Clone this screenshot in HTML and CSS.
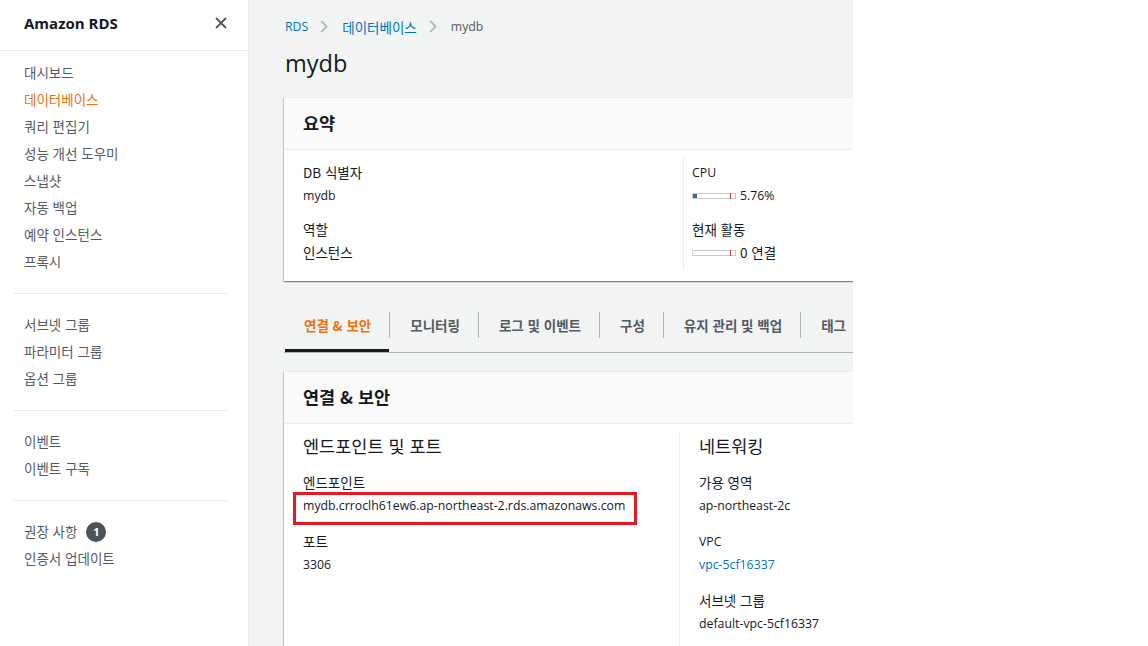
FILE: index.html
```html
<!DOCTYPE html>
<html lang="ko">
<head>
  <meta charset="UTF-8">
  <meta name="viewport" content="width=device-width, initial-scale=1.0">
  <title>RDS · mydb</title>
  <link rel="stylesheet" href="styles.css">
</head>
<body>
  <div class="layout">
    <aside class="sidebar">
      <div class="sidebar-head">
        <span class="brand">Amazon RDS</span>
        <svg class="close" width="12" height="12" viewBox="0 0 12 12"><path d="M1 1 L11 11 M11 1 L1 11" stroke="#545b64" stroke-width="1.8" fill="none"/></svg>
      </div>
      <ul class="nav nav-first">
        <li>대시보드</li>
        <li class="active">데이터베이스</li>
        <li>쿼리 편집기</li>
        <li>성능 개선 도우미</li>
        <li>스냅샷</li>
        <li>자동 백업</li>
        <li>예약 인스턴스</li>
        <li>프록시</li>
      </ul>
      <ul class="nav">
        <li>서브넷 그룹</li>
        <li>파라미터 그룹</li>
        <li>옵션 그룹</li>
      </ul>
      <ul class="nav">
        <li>이벤트</li>
        <li>이벤트 구독</li>
      </ul>
      <ul class="nav">
        <li>권장 사항 <span class="badge">1</span></li>
        <li>인증서 업데이트</li>
      </ul>
    </aside>

    <main class="main">
      <nav class="crumbs">
        <a class="link" lang="en">RDS</a>
        <svg class="chev" width="8" height="13" viewBox="0 0 8 13"><path d="M1.2 1 L6.5 6.5 L1.2 12" stroke="#aab7b8" stroke-width="1.8" fill="none"/></svg>
        <a class="link">데이터베이스</a>
        <svg class="chev" width="8" height="13" viewBox="0 0 8 13"><path d="M1.2 1 L6.5 6.5 L1.2 12" stroke="#aab7b8" stroke-width="1.8" fill="none"/></svg>
        <span class="crumb-current" lang="en">mydb</span>
      </nav>
      <h1>mydb</h1>

      <section class="card">
        <header class="card-head">요약</header>
        <div class="card-body summary">
          <div class="col col-left">
            <div class="field">
              <div class="label">DB 식별자</div>
              <div class="value" lang="en">mydb</div>
            </div>
            <div class="field">
              <div class="label">역할</div>
              <div class="value">인스턴스</div>
            </div>
          </div>
          <div class="col col-right">
            <div class="field">
              <div class="label" lang="en">CPU</div>
              <div class="value metric">
                <span class="meter"><span class="meter-fill" style="width: 9%"></span><span class="meter-mark"></span></span>
                <span lang="en">5.76%</span>
              </div>
            </div>
            <div class="field">
              <div class="label">현재 활동</div>
              <div class="value metric">
                <span class="meter"><span class="meter-fill" style="width: 0%"></span><span class="meter-mark"></span></span>
                <span>0 연결</span>
              </div>
            </div>
          </div>
        </div>
      </section>

      <div class="tabs">
        <div class="tab active">연결 &amp; 보안</div>
        <span class="tab-sep"></span>
        <div class="tab">모니터링</div>
        <span class="tab-sep"></span>
        <div class="tab">로그 및 이벤트</div>
        <span class="tab-sep"></span>
        <div class="tab">구성</div>
        <span class="tab-sep"></span>
        <div class="tab">유지 관리 및 백업</div>
        <span class="tab-sep"></span>
        <div class="tab">태그</div>
      </div>

      <section class="card">
        <header class="card-head">연결 &amp; 보안</header>
        <div class="card-body details">
          <div class="col col-left">
            <h2>엔드포인트 및 포트</h2>
            <div class="field">
              <div class="label">엔드포인트</div>
              <div class="value" lang="en"><span class="marked">mydb.crroclh61ew6.ap-northeast-2.rds.amazonaws.com</span></div>
            </div>
            <div class="field">
              <div class="label">포트</div>
              <div class="value" lang="en">3306</div>
            </div>
          </div>
          <div class="col col-right">
            <h2>네트워킹</h2>
            <div class="field">
              <div class="label">가용 영역</div>
              <div class="value" lang="en">ap-northeast-2c</div>
            </div>
            <div class="field">
              <div class="label" lang="en">VPC</div>
              <div class="value" lang="en"><a class="link">vpc-5cf16337</a></div>
            </div>
            <div class="field">
              <div class="label">서브넷 그룹</div>
              <div class="value" lang="en">default-vpc-5cf16337</div>
            </div>
          </div>
        </div>
      </section>
    </main>

    <div class="blank"></div>
  </div>
</body>
</html>
```

FILE: styles.css
```css
* {
  box-sizing: border-box;
}
body {
  margin: 0;
  font-family: "Noto Sans CJK KR", "Open Sans", sans-serif;
  font-size: 13.5px;
  color: #16191f;
  background: #fff;
}
[lang="en"] {
  font-family: "Open Sans", "Noto Sans CJK KR", sans-serif;
  font-size: 12.3px;
}
.layout {
  display: flex;
  height: 100vh;
  overflow: hidden;
}

/* sidebar */
.sidebar {
  width: 249px;
  flex-shrink: 0;
  border-right: 1px solid #eaeded;
  background: #fff;
}
.sidebar-head {
  display: flex;
  align-items: center;
  justify-content: space-between;
  height: 51px;
  padding: 0 21px 5px 24px;
  border-bottom: 1px solid #eaeded;
}
.brand {
  font-family: "Open Sans", sans-serif;
  font-size: 15px;
  font-weight: 700;
  color: #16191f;
}
.nav {
  list-style: none;
  margin: 0 18px 0 14px;
  padding: 17px 0 18px 10px;
  border-top: 1px solid #eaeded;
}
.nav-first {
  border-top: none;
  padding-top: 8px;
}
.nav li {
  line-height: 27px;
  color: #545b64;
  display: flex;
  align-items: center;
}
.nav li.active {
  color: #ec7211;
}
.badge {
  display: inline-flex;
  align-items: center;
  justify-content: center;
  width: 20px;
  height: 20px;
  margin-left: 9px;
  border-radius: 50%;
  background: #4d535b;
  color: #fff;
  font-family: "Open Sans", sans-serif;
  font-size: 11px;
  font-weight: 700;
  line-height: 1;
}

/* main */
.main {
  width: 604px;
  flex-shrink: 0;
  background: #f2f3f3;
  padding-left: 35px;
  overflow: hidden;
}
.blank {
  flex: 1;
  background: #fff;
}
.link {
  color: #0073bb;
  text-decoration: none;
}
.crumbs {
  display: flex;
  align-items: center;
  padding: 16px 0 0 1px;
  height: 37px;
  line-height: 20px;
}
.chev {
  margin: 0 14px 0 12px;
}
.crumb-current {
  color: #545b64;
}
h1 {
  margin: 10px 0 18px 1px;
  font-family: "Open Sans", sans-serif;
  font-size: 23.5px;
  font-weight: 400;
  line-height: 32px;
  color: #16191f;
}
.card {
  width: 760px;
  background: #fff;
  border-top: 1px solid #eaeded;
  box-shadow: 0 1px 1px 0 rgba(0,28,36,0.3), 1px 1px 1px 0 rgba(0,28,36,0.15), -1px 1px 1px 0 rgba(0,28,36,0.15);
}
.card-head {
  height: 52px;
  display: flex;
  align-items: center;
  padding: 0 0 3px 19px;
  background: #fafafa;
  border-bottom: 1px solid #eaeded;
  font-size: 17.5px;
  font-weight: 700;
}
.card-body {
  display: flex;
}
.summary {
  padding: 5px 0 11px;
}
.summary .col-left {
  width: 399px;
  padding: 6px 19px;
}
.summary .col-right {
  padding: 6px 8px;
  border-left: 1px solid #eaeded;
}
.summary .field + .field {
  margin-top: 11px;
}
.label,
.value {
  line-height: 23px;
}
.metric {
  display: flex;
  align-items: center;
  gap: 4px;
}
.meter {
  position: relative;
  display: inline-block;
  width: 44px;
  height: 6px;
  border: 1px solid #c6cbcd;
  background: #fff;
}
.meter-fill {
  display: block;
  height: 100%;
  background: #4d6a8c;
}
.meter-mark {
  position: absolute;
  left: 37px;
  top: -1px;
  bottom: -1px;
  width: 1px;
  background: #d13212;
}

/* tabs */
.tabs {
  display: flex;
  align-items: center;
  width: 760px;
  height: 55px;
  margin-top: 17px;
  border-bottom: 1px solid #aab7b8;
}
.tab {
  position: relative;
  flex-shrink: 0;
  height: 54px;
  display: flex;
  align-items: center;
  padding: 0 18px 0 20px;
  font-weight: 700;
  color: #545b64;
}
.tab.active {
  color: #ec7211;
}
.tab.active::after {
  content: '';
  position: absolute;
  left: 1px;
  right: 0;
  bottom: 0;
  height: 3px;
  background: #16191f;
}
.tab-sep {
  flex-shrink: 0;
  width: 1px;
  height: 26px;
  background: #aab7b8;
}

/* details card */
.tabs + .card {
  margin-top: 18px;
}
.details {
  padding-top: 8px;
}
.details .col {
  padding: 3px 19px 40px;
}
.details .col-left {
  width: 395px;
}
.details .col-right {
  border-left: 1px solid #eaeded;
}
h2 {
  margin: 0 0 13.5px;
  font-size: 17.5px;
  font-weight: 400;
  line-height: 22px;
}
.details .field + .field {
  margin-top: 13px;
}
.marked {
  position: relative;
  display: inline-block;
}
.marked::after {
  content: '';
  position: absolute;
  left: -10px;
  right: -12px;
  top: -2px;
  bottom: -8px;
  border: 3.5px solid #e41b23;
}
```
